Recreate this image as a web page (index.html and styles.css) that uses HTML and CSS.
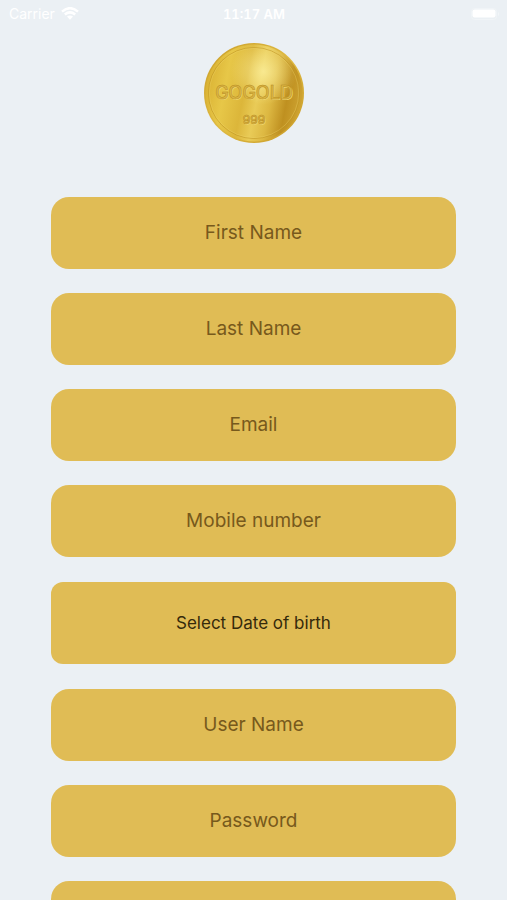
FILE: index.html
```html
<!DOCTYPE html>
<html lang="en">
<head>
  <meta charset="utf-8">
  <meta name="viewport" content="width=device-width, initial-scale=1">
  <title>Sign up</title>
  <link rel="stylesheet" href="styles.css">
</head>
<body>
  <div class="screen">
    <header class="status">
      <div class="status-left">
        <span>Carrier</span>
        <svg class="wifi" viewBox="0 0 18 13" aria-hidden="true">
          <path d="M1 4.6Q9-2.2 17 4.6M3.8 7.5Q9 3.2 14.2 7.5" fill="none" stroke="currentColor" stroke-width="2.5"/>
          <path d="M6 9.6Q9 7.4 12 9.6L9 12.8Z" fill="currentColor"/>
        </svg>
      </div>
      <span class="time">11:17 AM</span>
      <div class="status-right">
        <svg class="battery" viewBox="0 0 28 12" aria-hidden="true">
          <rect x="0.5" y="0.5" width="25" height="11" rx="3" fill="none" stroke="currentColor" stroke-opacity=".25"/>
          <rect x="1.5" y="1.5" width="23" height="8" rx="2" fill="currentColor"/>
          <path d="M27 4v4q1-.6 1-2t-1-2z" fill="currentColor" fill-opacity=".4"/>
        </svg>
      </div>
    </header>
    <main>
      <svg class="coin" viewBox="0 0 100 100" role="img" aria-label="GoGold 999">
        <defs>
          <linearGradient id="face" x1="0" y1=".4" x2="1" y2=".6">
            <stop offset="0" stop-color="#dab233"/>
            <stop offset=".2" stop-color="#e7c748"/>
            <stop offset=".4" stop-color="#dcb63a"/>
            <stop offset=".54" stop-color="#e9cb57"/>
            <stop offset=".68" stop-color="#ddb842"/>
            <stop offset=".84" stop-color="#bf9020"/>
            <stop offset="1" stop-color="#cfa432"/>
          </linearGradient>
          <radialGradient id="shine" cx=".6" cy=".28" r=".34">
            <stop offset="0" stop-color="#fff6a8" stop-opacity=".7"/>
            <stop offset="1" stop-color="#fff3a0" stop-opacity="0"/>
          </radialGradient>
          <linearGradient id="rim" x1="0" y1="0" x2="1" y2="1">
            <stop offset="0" stop-color="#c99e28"/>
            <stop offset=".5" stop-color="#dfba42"/>
            <stop offset="1" stop-color="#c89a25"/>
          </linearGradient>
        </defs>
        <circle cx="50" cy="50" r="50" fill="url(#rim)"/>
        <circle cx="50" cy="50" r="48.5" fill="url(#face)"/>
        <circle cx="50" cy="50" r="48.5" fill="url(#shine)"/>
        <circle cx="50" cy="50" r="45.5" fill="none" stroke="#bd911f" stroke-opacity=".7" stroke-width=".8"/>
        <circle cx="50" cy="50" r="44.7" fill="none" stroke="#f2da73" stroke-opacity=".5" stroke-width=".6"/>
        <g class="engraving">
          <text class="light" x="51" y="57">GOGOLD</text>
          <text class="dark" x="50" y="56">GOGOLD</text>
          <text class="light small" x="51" y="82">999</text>
          <text class="dark small" x="50" y="81">999</text>
        </g>
      </svg>
      <form class="form">
        <input class="field" type="text" placeholder="First Name" aria-label="First Name">
        <input class="field" type="text" placeholder="Last Name" aria-label="Last Name">
        <input class="field" type="email" placeholder="Email" aria-label="Email">
        <input class="field" type="tel" placeholder="Mobile number" aria-label="Mobile number">
        <button class="date" type="button">Select Date of birth</button>
        <input class="field" type="text" placeholder="User Name" aria-label="User Name">
        <input class="field" type="password" placeholder="Password" aria-label="Password">
        <input class="field" type="password" aria-label="Confirm password">
      </form>
    </main>
  </div>
</body>
</html>
```
FILE: styles.css
```css
* {
  box-sizing: border-box;
}

body {
  margin: 0;
  background: #ebf0f4;
  font-family: Inter, "Liberation Sans", sans-serif;
}

.screen {
  height: 100vh;
  overflow: hidden auto;
  scrollbar-width: none;
}

.status {
  display: grid;
  grid-template-columns: 1fr auto 1fr;
  align-items: center;
  height: 27px;
  padding: 0 8px 0 9px;
  color: #fff;
  font-size: 14px;
}

.status-left {
  display: flex;
  align-items: center;
  gap: 6px;
}

.status-right {
  display: flex;
  justify-content: flex-end;
}

.time {
  font-size: 13px;
  font-weight: 600;
  font-variant-numeric: tabular-nums;
}

.wifi {
  width: 18px;
  height: 13px;
}

.battery {
  width: 28px;
  height: 12px;
}

main {
  display: flex;
  flex-direction: column;
  align-items: center;
  gap: 54px;
  padding: 16px 0 24px;
}

.coin {
  width: 100px;
  height: 100px;
}

.engraving {
  font-family: Inter, sans-serif;
  font-size: 18px;
  font-weight: 500;
  text-anchor: middle;
}

.engraving .small {
  font-size: 12px;
}

.light {
  fill: #efd469;
}

.dark {
  fill: #dcb743;
  stroke: #b68a22;
  stroke-width: 0.5px;
}

.form {
  display: flex;
  flex-direction: column;
  gap: 24px;
  width: 80%;
}

.field,
.date {
  width: 100%;
  border: 0;
  background: #e0bc55;
  font-family: inherit;
  text-align: center;
}

.field {
  height: 72px;
  padding: 0 16px 2px;
  border-radius: 18px;
  color: #44340c;
  font-size: 19px;
}

.field::placeholder {
  color: #77591c;
  opacity: 1;
}

.date {
  height: 82px;
  margin: 1px 0;
  padding: 0 16px;
  border-radius: 12px;
  color: #352a0b;
  font-size: 17px;
}
```
